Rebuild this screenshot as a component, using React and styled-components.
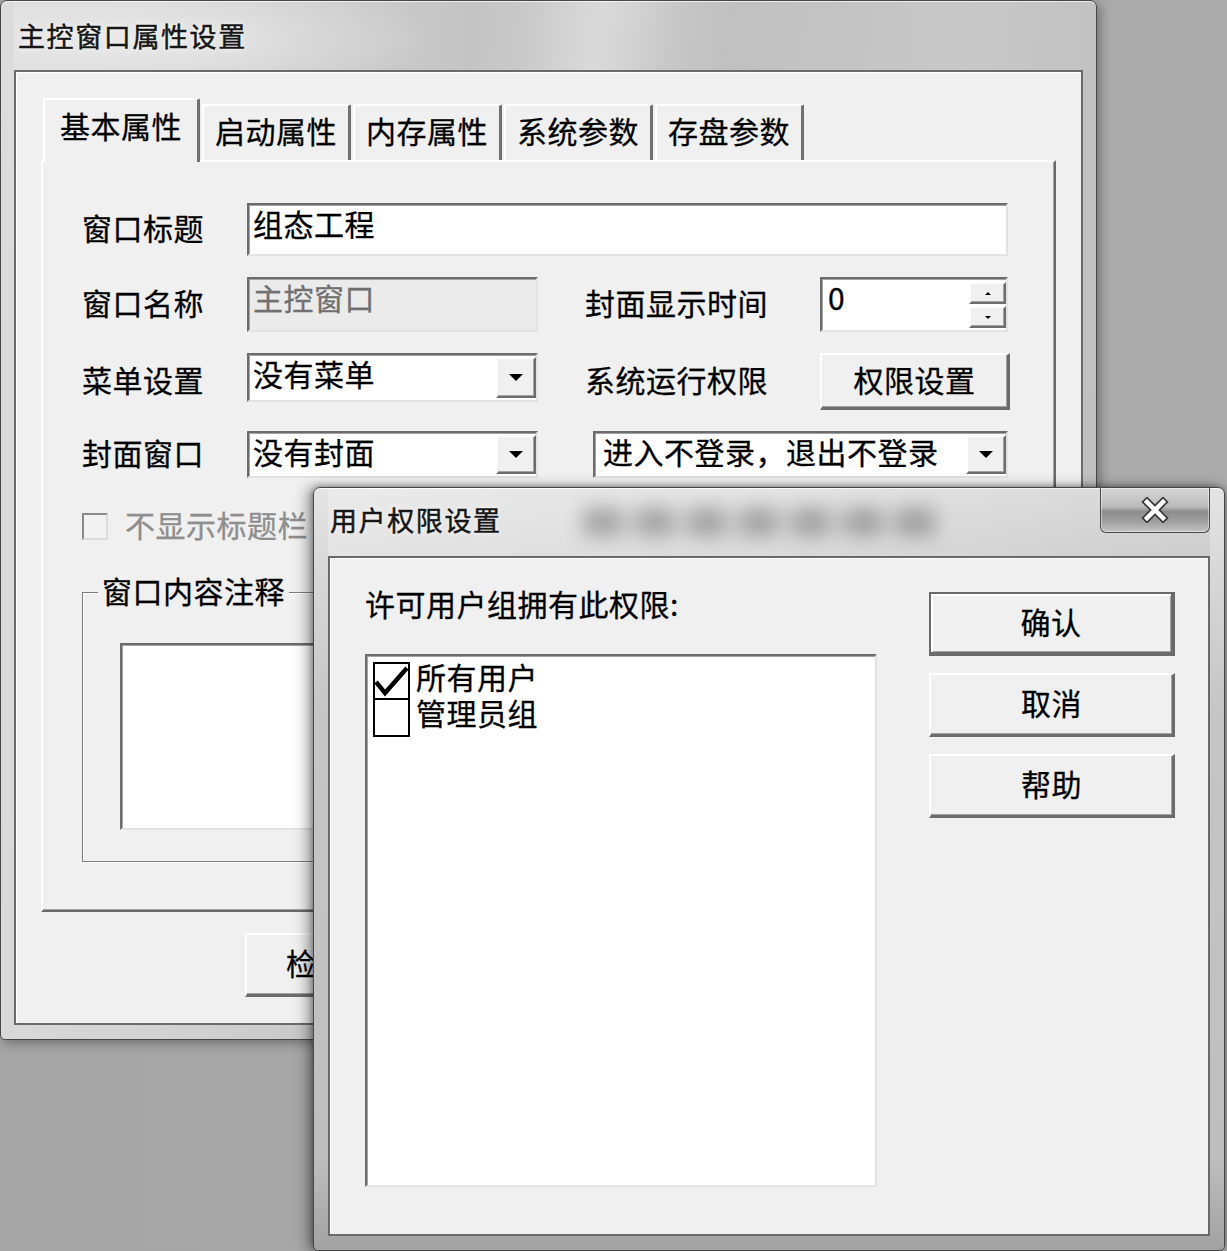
import React from 'react';
import styled, { createGlobalStyle, css } from 'styled-components';

const GlobalStyle = createGlobalStyle`
  html, body {
    margin: 0;
    padding: 0;
  }
  body {
    background: #a9a9a9;
    font-family: "Noto Sans CJK SC", "Noto Sans", sans-serif;
  }
  * {
    box-sizing: border-box;
  }
`;

const sunken = css`
  border: 2px solid;
  border-color: #6c6c6c #e2e2e2 #e2e2e2 #6c6c6c;
  box-shadow: inset 1px 1px 0 #a3a3a3;
`;

const raised = css`
  background: #f0f0f0;
  border: 2px solid;
  border-color: #ffffff #6c6c6c #6c6c6c #ffffff;
  box-shadow: inset -1px -1px 0 #a3a3a3;
`;

const uiText = css`
  font-size: 30px;
  line-height: 30px;
  letter-spacing: 0.5px;
  white-space: nowrap;
  -webkit-text-stroke: 0.3px currentColor;
`;

const Desktop = styled.div`
  position: relative;
  width: 1227px;
  height: 1251px;
  overflow: hidden;
  background: linear-gradient(90deg, #a6a6a6, #ababab);
`;

/* windows sit on a free desktop canvas */
const Window = styled.div`
  position: absolute;
  left: ${p => p.$x}px;
  top: ${p => p.$y}px;
  width: ${p => p.$w}px;
  height: ${p => p.$h}px;
  display: flex;
  flex-direction: column;
  padding: 0 ${p => p.$side}px 14px;
  border: 1px solid #474747;
  border-radius: 7px 7px 5px 5px;
  background: ${p => p.$dialog
    ? 'linear-gradient(180deg, #e4e4e4 0px, #dadada 68px, #c6c6c6 220px, #bebebe 88%, #a2a2a2 100%)'
    : 'linear-gradient(95deg, #dcdcdc 0%, #d2d2d2 22%, #c4c4c4 40%, #d0d0d0 50%, #c0c0c0 62%, #c8c8c8 82%, #bdbdbd 100%)'};
  box-shadow: ${p => p.$dialog
    ? 'inset 0 1px 0 rgba(255,255,255,0.85), -6px 0 14px rgba(0,0,0,0.35), 0 0 6px rgba(0,0,0,0.4)'
    : 'inset 0 1px 0 rgba(255,255,255,0.7), 3px 3px 12px rgba(0,0,0,0.35)'};
`;

const TitleBar = styled.div`
  position: relative;
  flex: none;
  height: ${p => p.$h}px;
  display: flex;
  align-items: center;
  padding-left: ${p => p.$pad}px;
  background: ${p => p.$dialog
    ? 'linear-gradient(90deg, rgba(255,255,255,0.25), rgba(255,255,255,0) 55%, rgba(0,0,0,0.06))'
    : 'radial-gradient(ellipse 300px 60px at 130px 38px, rgba(255,255,255,0.45), rgba(255,255,255,0) 100%), linear-gradient(100deg, rgba(255,255,255,0) 48%, rgba(255,255,255,0.22) 55%, rgba(255,255,255,0) 62%)'};
`;

const TitleText = styled.span`
  position: relative;
  font-size: 27px;
  line-height: 30px;
  letter-spacing: 1.6px;
  color: #161616;
  margin-top: ${p => p.$dy || 0}px;
  -webkit-text-stroke: 0.5px #161616;
  text-shadow: 0 0 6px rgba(255, 255, 255, 0.95), 0 0 2px rgba(255, 255, 255, 0.9);
`;

const GlassBlur = styled.div`
  position: absolute;
  left: 255px;
  top: 20px;
  width: 360px;
  height: 28px;
  filter: blur(10px);
  opacity: 0.4;
  background: repeating-linear-gradient(90deg, #444 0 40px, rgba(0,0,0,0) 40px 52px);
`;

const CloseButton = styled.div`
  align-self: flex-start;
  margin-left: auto;
  width: 110px;
  height: 45px;
  display: flex;
  align-items: center;
  justify-content: center;
  border: 1px solid #4a4a4a;
  border-top: 0;
  border-radius: 0 0 6px 6px;
  background: linear-gradient(180deg, #d6d6d6 0%, #bcbcbc 42%, #8c8c8c 54%, #a2a2a2 78%, #c4c4c4 100%);
  box-shadow: inset 0 0 0 1px rgba(255, 255, 255, 0.45);
`;

const Client = styled.div`
  flex: 1;
  display: flex;
  flex-direction: ${p => p.$row ? 'row' : 'column'};
  background: #f0f0f0;
  border: 2px solid #6a6a6a;
  box-shadow: inset 1px 1px 0 #ffffff;
  padding: ${p => p.$pad};
`;

const TabStrip = styled.div`
  position: relative;
  z-index: 1;
  flex: none;
  height: 62px;
  display: flex;
  align-items: flex-end;
  gap: 2px;
  padding-left: 2px;
`;

const Tab = styled.div`
  ${uiText};
  height: ${p => p.$active ? 64 : 56}px;
  margin-bottom: ${p => p.$active ? -2 : 0}px;
  padding: 0 ${p => p.$active ? 15 : 11}px ${p => p.$active ? 12 : 6}px;
  display: flex;
  align-items: center;
  background: #f0f0f0;
  color: #000;
  border-top: 2px solid #ffffff;
  border-left: 2px solid #ffffff;
  border-right: 3px solid #707070;
  border-radius: 2px 2px 0 0;
`;

const Panel = styled.div`
  flex: none;
  height: 752px;
  border-top: 2px solid #ffffff;
  border-left: 2px solid #ffffff;
  border-right: 2px solid #6a6a6a;
  border-bottom: 2px solid #6a6a6a;
  box-shadow: inset -1px -1px 0 #a3a3a3;
  padding: 41px 0 0 39px;
`;

const FormGrid = styled.div`
  display: grid;
  grid-template-columns: 165px 291px 47px 235px 188px;
  grid-template-rows: 53px 55px 57px 47px;
  row-gap: 21px;
  align-items: start;
`;

const FieldLabel = styled.div`
  ${uiText};
  grid-column: ${p => p.$col};
  align-self: center;
  margin-top: -6px;
  color: #000;
`;

const Box = styled.div`
  ${sunken};
  grid-column: ${p => p.$col};
  height: ${p => p.$h}px;
  margin-left: ${p => p.$ml || 0}px;
  display: flex;
  align-items: stretch;
  background: ${p => p.$disabled ? '#ebebeb' : '#ffffff'};
  color: ${p => p.$disabled ? '#707070' : '#000000'};
`;

const BoxText = styled.div`
  ${uiText};
  flex: 1;
  padding: 3px 0 0 ${p => p.$pl || 4}px;
`;

const ArrowButton = styled.div`
  ${raised};
  flex: none;
  width: 40px;
  margin: 2px 0;
  display: flex;
  align-items: center;
  justify-content: center;
`;

const Arrow = styled.span`
  width: 0;
  height: 0;
  border-left: ${p => p.$size}px solid transparent;
  border-right: ${p => p.$size}px solid transparent;
  ${p => p.$up
    ? `border-bottom: ${p.$size}px solid #000;`
    : `border-top: ${p.$size}px solid #000;`}
`;

const SpinButtons = styled.div`
  flex: none;
  width: 37px;
  margin: 3px 0 2px;
  display: flex;
  flex-direction: column;
  gap: 2px;
`;

const SpinButton = styled.div`
  ${raised};
  flex: 1;
  display: flex;
  align-items: center;
  justify-content: center;
`;

const PushButton = styled.div`
  ${raised};
  ${uiText};
  grid-column: ${p => p.$col || 'auto'};
  flex: none;
  width: ${p => p.$w}px;
  height: ${p => p.$h}px;
  padding-bottom: 5px;
  display: flex;
  align-items: center;
  justify-content: center;
  color: #000;
  border-right-width: 3px;
  border-bottom-width: 3px;
  ${p => p.$default && css`
    border: 2px solid #6a6a6a;
    border-right-width: 4px;
    border-bottom-width: 4px;
    box-shadow: inset 2px 2px 0 #ffffff, inset -1px -1px 0 #a3a3a3;
  `}
`;

const CheckRow = styled.div`
  display: flex;
  align-items: center;
  margin-top: 35px;
  height: 27px;
`;

const DisabledCheck = styled.span`
  width: 26px;
  height: 27px;
  border: 2px solid;
  border-color: #8a8a8a #dcdcdc #dcdcdc #8a8a8a;
  background: #f2f2f2;
`;

const CheckLabel = styled.span`
  ${uiText};
  margin: -6px 0 0 17px;
  color: #8e8e8e;
`;

const GroupBox = styled.fieldset`
  margin: 37px 0 0;
  width: 926px;
  height: 285px;
  padding: 36px 0 0;
  border: 1px solid #7c7c7c;
  box-shadow: 1px 1px 0 #ffffff, inset 1px 1px 0 #ffffff;
`;

const GroupLegend = styled.legend`
  ${uiText};
  margin-left: 15px;
  padding: 0 4px 4px;
  line-height: 26px;
  background: #f0f0f0;
  color: #000;
`;

const MemoBox = styled.div`
  ${sunken};
  margin-left: 37px;
  width: 850px;
  height: 187px;
  background: #ffffff;
`;

const BottomButtons = styled.div`
  display: flex;
  gap: 22px;
  margin-top: 21px;
  padding-left: 204px;
`;

const LeftCol = styled.div`
  flex: none;
  width: 512px;
  display: flex;
  flex-direction: column;
`;

const Prompt = styled.div`
  ${uiText};
  margin-top: -3px;
  padding-bottom: 3px;
  color: #000;
`;

const ListBox = styled.div`
  ${sunken};
  margin-top: 33px;
  height: 533px;
  background: #ffffff;
  padding: 6px 0 0 6px;
`;

const ListItem = styled.div`
  display: flex;
  align-items: flex-start;
  height: 38px;
  & + & {
    margin-top: -2px;
    height: 39px;
  }
`;

const ItemBox = styled.span`
  flex: none;
  width: 37px;
  height: 100%;
  border: 2px solid #000;
  background: #ffffff;
  display: flex;
`;

const ItemText = styled.span`
  ${uiText};
  line-height: 28px;
  margin: 0 0 0 6px;
  color: #000;
`;

const ButtonCol = styled.div`
  flex: none;
  margin: 1px 0 0 52px;
  display: flex;
  flex-direction: column;
  gap: 17px;
`;

const CheckMark = () => (
  <svg width="33" height="100%" viewBox="0 0 33 34">
    <polyline points="1,18 10,29 32,4" fill="none" stroke="#000" strokeWidth="4.5" />
  </svg>
);

const CloseGlyph = () => (
  <svg width="28" height="26" viewBox="0 0 28 26">
    <g strokeLinecap="square">
      <path d="M6 5 L22 21 M22 5 L6 21" stroke="#3c3c3c" strokeWidth="8" />
      <path d="M6 5 L22 21 M22 5 L6 21" stroke="#ffffff" strokeWidth="4.5" />
    </g>
  </svg>
);

const tabs = ['基本属性', '启动属性', '内存属性', '系统参数', '存盘参数'];

const groups = [
  { name: '所有用户', checked: true },
  { name: '管理员组', checked: false },
];

const Combo = ({ col, h, ml, pl, children }) => (
  <Box $col={col} $h={h} $ml={ml}>
    <BoxText $pl={pl}>{children}</BoxText>
    <ArrowButton>
      <Arrow $size={7} />
    </ArrowButton>
  </Box>
);

const App = () => (
  <>
    <GlobalStyle />
    <Desktop>
      <Window $x={0} $y={0} $w={1097} $h={1040} $side={13}>
        <TitleBar $h={69} $pad={4}>
          <TitleText $dy={0}>主控窗口属性设置</TitleText>
        </TitleBar>
        <Client $pad="26px 25px 0">
          <TabStrip>
            {tabs.map((t, i) => (
              <Tab key={t} $active={i === 0}>{t}</Tab>
            ))}
          </TabStrip>
          <Panel>
            <FormGrid>
              <FieldLabel $col="1">窗口标题</FieldLabel>
              <Box $col="2 / 6" $h={53}>
                <BoxText>组态工程</BoxText>
              </Box>

              <FieldLabel $col="1">窗口名称</FieldLabel>
              <Box $col="2" $h={55} $disabled>
                <BoxText>主控窗口</BoxText>
              </Box>
              <FieldLabel $col="4">封面显示时间</FieldLabel>
              <Box $col="5" $h={55}>
                <BoxText $pl={6}>0</BoxText>
                <SpinButtons>
                  <SpinButton><Arrow $up $size={3} /></SpinButton>
                  <SpinButton><Arrow $size={3} /></SpinButton>
                </SpinButtons>
              </Box>

              <FieldLabel $col="1">菜单设置</FieldLabel>
              <Combo col="2" h={49}>没有菜单</Combo>
              <FieldLabel $col="4">系统运行权限</FieldLabel>
              <PushButton $col="5" $w={190} $h={57}>权限设置</PushButton>

              <FieldLabel $col="1">封面窗口</FieldLabel>
              <Combo col="2" h={47}>没有封面</Combo>
              <Combo col="4 / 6" h={47} ml={8} pl={8}>进入不登录，退出不登录</Combo>
            </FormGrid>

            <CheckRow>
              <DisabledCheck />
              <CheckLabel>不显示标题栏</CheckLabel>
            </CheckRow>

            <GroupBox>
              <GroupLegend>窗口内容注释</GroupLegend>
              <MemoBox />
            </GroupBox>
          </Panel>
          <BottomButtons>
            <PushButton $w={185} $h={64}>检查(C)</PushButton>
            <PushButton $w={185} $h={64}>确认(Y)</PushButton>
            <PushButton $w={185} $h={64}>取消(N)</PushButton>
          </BottomButtons>
        </Client>
      </Window>

      <Window $x={313} $y={487} $w={912} $h={764} $side={14} $dialog>
        <TitleBar $h={68} $pad={2} $dialog>
          <GlassBlur />
          <TitleText $dy={-4}>用户权限设置</TitleText>
          <CloseButton>
            <CloseGlyph />
          </CloseButton>
        </TitleBar>
        <Client $row $pad="33px 0 0 35px">
          <LeftCol>
            <Prompt>许可用户组拥有此权限:</Prompt>
            <ListBox>
              {groups.map(g => (
                <ListItem key={g.name}>
                  <ItemBox>{g.checked && <CheckMark />}</ItemBox>
                  <ItemText>{g.name}</ItemText>
                </ListItem>
              ))}
            </ListBox>
          </LeftCol>
          <ButtonCol>
            <PushButton $w={246} $h={64} $default>确认</PushButton>
            <PushButton $w={246} $h={64}>取消</PushButton>
            <PushButton $w={246} $h={64}>帮助</PushButton>
          </ButtonCol>
        </Client>
      </Window>
    </Desktop>
  </>
);

export default App;
